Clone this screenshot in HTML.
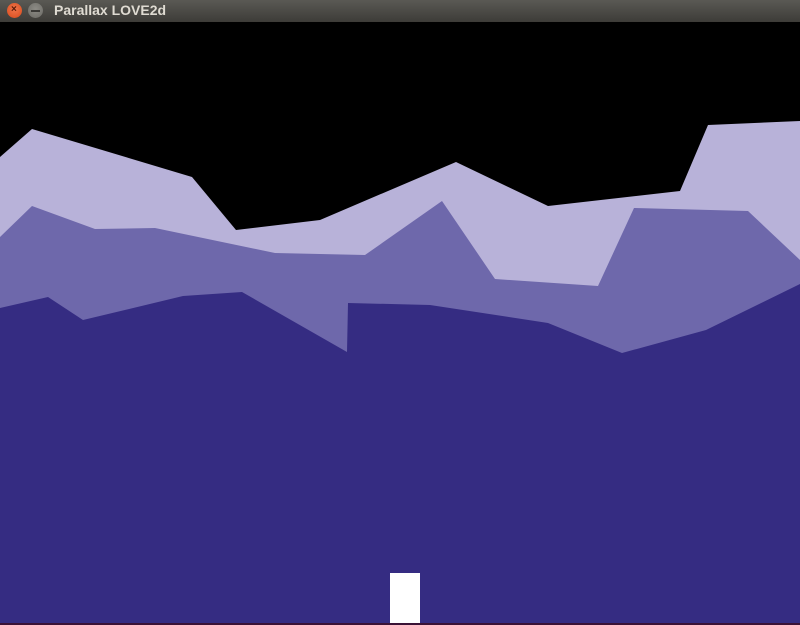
<!DOCTYPE html>
<html><head><meta charset="utf-8"><style>
html,body{margin:0;padding:0;width:800px;height:625px;overflow:hidden;background:#000}
.bar{position:absolute;left:0;top:0;width:800px;height:22px;background:linear-gradient(#5a5954,#3d3c38);}
.t{position:absolute;left:54px;top:2px;font:bold 14px "Liberation Sans",sans-serif;color:#dfdbd2;}
.b{position:absolute;top:3px;width:15px;height:15px;border-radius:50%;}
</style></head><body>
<div class="bar">
<div class="b" style="left:7px;background:radial-gradient(circle at 50% 40%,#f0754a,#d84a1c);"></div>
<div style="position:absolute;left:11px;top:4px;font:bold 10px 'Liberation Sans',sans-serif;color:#5a1a08">×</div>
<div class="b" style="left:28px;background:radial-gradient(circle at 50% 40%,#8d8c86,#6a6964);"></div>
<div style="position:absolute;left:31px;top:10px;width:9px;height:2px;background:#3a3936"></div>
<div class="t">Parallax LOVE2d</div>
</div>
<svg width="800" height="625" style="position:absolute;left:0;top:0;z-index:-0" viewBox="0 0 800 625">
<rect x="0" y="22" width="800" height="603" fill="#000"/>
<polygon fill="#b8b2d9" points="0,157 32,129 192,177 236,230 320,220 456,162 548,206 680,191 708,125 800,121 800,625 0,625"/>
<polygon fill="#6e68ab" points="0,237 32,206 95,229 155,228 275,253 365,255 442,201 495,279 598,286 634,208 748,211 800,260 800,625 0,625"/>
<polygon fill="#352c82" points="0,308 48,297 83,320 183,296 242,292 347,352 348,303 430,305 548,323 622,353 706,330 800,284 800,625 0,625"/>
<rect x="390" y="573" width="30" height="50" fill="#fff"/>
<rect x="0" y="623" width="800" height="2" fill="#3a1236"/>
</svg>
</body></html>
